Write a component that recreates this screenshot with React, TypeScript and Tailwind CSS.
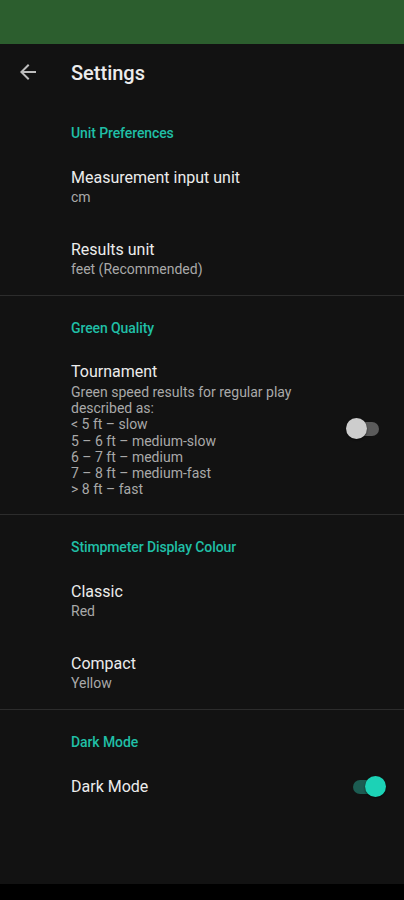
import React from "react";

const font = { fontFamily: "Roboto, 'Noto Sans', sans-serif" };

function Category({ label, first }: { label: string; first?: boolean }) {
  return (
    <div className={`pl-[71px] pb-[10px] ${first ? "pt-[25px]" : "pt-[24px]"}`}>
      <div className="text-[14px] leading-[16px] font-medium text-[#20bfa6] tracking-[-0.1px]">{label}</div>
    </div>
  );
}

function Item({ title, summary }: { title: string; summary: string }) {
  return (
    <div className="pl-[71px] pr-4 h-[72px] pt-[17px]">
      <div className="text-[16px] leading-[20px] text-[#ececec]">{title}</div>
      <div className="text-[14px] leading-[20px] text-[#a9a9a9] -mt-[1px]">{summary}</div>
    </div>
  );
}

function Divider() {
  return <div className="h-px bg-[#2c2c2c]" />;
}

export default function App() {
  return (
    <div style={font} className="w-[404px] h-[900px] flex flex-col bg-[#121212] overflow-hidden">
      <div className="h-[44px] bg-[#2c5e2e] shrink-0" />
      <div className="h-[56px] flex items-center shrink-0">
        <div className="w-[71px] pl-[16px] flex items-center">
          <svg width="24" height="24" viewBox="0 0 24 24" fill="#bdbdbd">
            <path d="M20 11H7.83l5.59-5.59L12 4l-8 8 8 8 1.41-1.41L7.83 13H20v-2z" />
          </svg>
        </div>
        <div className="text-[20px] font-medium text-[#ececec] mt-[2px]">Settings</div>
      </div>
      <div className="flex-1">
        <Category label="Unit Preferences" first />
        <Item title="Measurement input unit" summary="cm" />
        <Item title="Results unit" summary="feet (Recommended)" />
        <Divider />
        <Category label="Green Quality" />
        <div className="flex items-center pl-[71px] pt-[16px] pb-[17px]">
          <div className="flex-1">
            <div className="text-[16px] leading-[20px] text-[#ececec]">Tournament</div>
            <div className="text-[14px] leading-[16.2px] text-[#a9a9a9] mt-[2px]">
              <div>Green speed results for regular play</div>
              <div>described as:</div>
              <div>&lt; 5 ft – slow</div>
              <div>5 – 6 ft – medium-slow</div>
              <div>6 – 7 ft – medium</div>
              <div>7 – 8 ft – medium-fast</div>
              <div>&gt; 8 ft – fast</div>
            </div>
          </div>
          <div className="relative w-[34px] h-[22px] mr-[24px] mt-[-2px] flex items-center">
            <div className="w-[32px] h-[14px] rounded-full bg-[#5b5b5b] ml-[1px]" />
            <div className="absolute left-0 top-0 w-[21px] h-[21px] rounded-full bg-[#cdcdcd] shadow-[0_1px_2px_rgba(0,0,0,0.6)]" />
          </div>
        </div>
        <Divider />
        <Category label="Stimpmeter Display Colour" />
        <Item title="Classic" summary="Red" />
        <Item title="Compact" summary="Yellow" />
        <Divider />
        <Category label="Dark Mode" />
        <div className="flex items-center pl-[71px] h-[54px]">
          <div className="flex-1 text-[16px] leading-[20px] text-[#ececec]">Dark Mode</div>
          <div className="relative w-[33px] h-[22px] mr-[18px] flex items-center">
            <div className="w-[31px] h-[14px] rounded-full bg-[#1c5c52]" />
            <div className="absolute right-0 top-0 w-[21px] h-[21px] rounded-full bg-[#1cd2b6] shadow-[0_1px_2px_rgba(0,0,0,0.6)]" />
          </div>
        </div>
      </div>
      <div className="h-[16px] bg-black shrink-0" />
    </div>
  );
}
